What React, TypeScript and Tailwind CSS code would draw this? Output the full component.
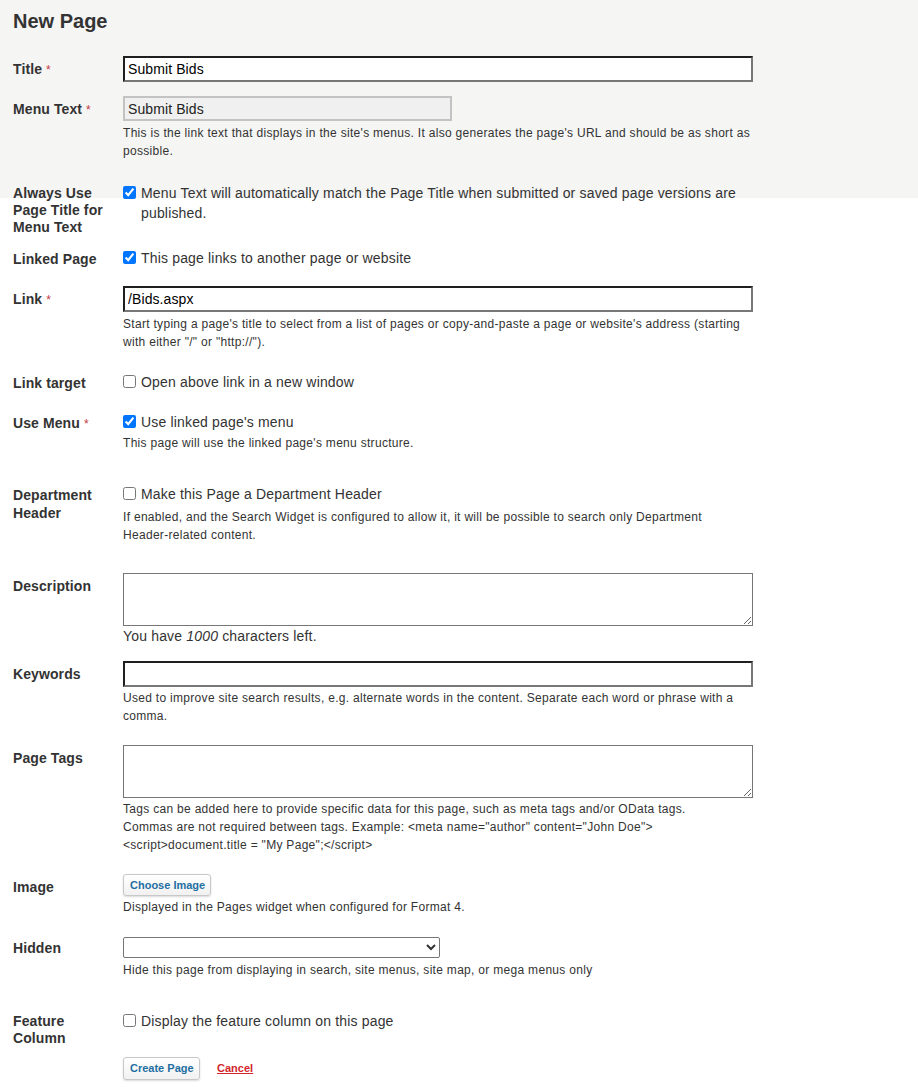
import type { ReactNode } from 'react';

const font = { fontFamily: '"Liberation Sans", Arial, sans-serif' };

function Req() {
  return <span className="ml-[4px] text-[12px] font-normal leading-none text-[#c8383c]">*</span>;
}

function Row({ label, labelClass = 'leading-[26px]', className = '', children }: {
  label: ReactNode; labelClass?: string; className?: string; children: ReactNode;
}) {
  return (
    <div className={`flex items-start ${className}`}>
      <div className={`w-[100px] mr-[10px] shrink-0 text-[14px] font-bold tracking-[0.1px] text-[#333] ${labelClass}`}>{label}</div>
      <div className="w-[630px]">{children}</div>
    </div>
  );
}

function Help({ children, className = 'mt-[3px]' }: { children: ReactNode; className?: string }) {
  return <p className={`text-[12px] leading-[18px] tracking-[0.3px] text-[#333] ${className}`}>{children}</p>;
}

function Check({ checked, children }: { checked?: boolean; children: ReactNode }) {
  return (
    <label className="flex items-start text-[14px] leading-[20px] tracking-[0.17px] text-[#333]">
      <input type="checkbox" defaultChecked={checked} className="mt-[3px] mr-[5px] h-[13px] w-[13px] shrink-0 accent-[#0075ff]" />
      <span>{children}</span>
    </label>
  );
}

const inset = 'block w-full h-[26px] border-2 border-t-[#1f1f1f] border-l-[#1f1f1f] border-r-[#777] border-b-[#777] bg-white px-[3px] text-[14px] tracking-[0.1px] text-black outline-none';
const btn = 'block whitespace-nowrap rounded-[3px] border border-[#c8c8c8] bg-gradient-to-b from-white to-[#f1f1f1] px-[6px] text-[11px] font-bold text-[#1f6fa3] shadow-[0_1px_2px_rgba(0,0,0,0.15)]';

export default function App() {
  return (
    <div
      style={font}
      className="min-h-[1092px] bg-white bg-[linear-gradient(#f5f5f4,#f5f5f4)] bg-no-repeat bg-[length:100%_198px] pl-[13px] text-[#333]"
    >
      <h1 className="pt-[9px] text-[20px] font-bold leading-[24px] text-[#333]">New Page</h1>

      <Row label={<>Title<Req /></>} className="mt-[23px]">
        <input className={inset} defaultValue="Submit Bids" />
      </Row>

      <Row label={<>Menu Text<Req /></>} className="mt-[14px]">
        <input
          disabled
          className="block h-[25px] w-[329px] border-2 border-[#c3c3c3] bg-[#f0f0f0] px-[3px] text-[14px] tracking-[0.1px] text-[#222]"
          defaultValue="Submit Bids"
        />
        <Help>This is the link text that displays in the site's menus. It also generates the page's URL and should be as short as possible.</Help>
      </Row>

      <Row label="Always Use Page Title for Menu Text" labelClass="leading-[17px] pt-[2px]" className="mt-[23px]">
        <Check checked>Menu Text will automatically match the Page Title when submitted or saved page versions are published.</Check>
      </Row>

      <Row label="Linked Page" labelClass="leading-[20px] pt-[1px]" className="mt-[12px]">
        <Check checked>This page links to another page or website</Check>
      </Row>

      <Row label={<>Link<Req /></>} className="mt-[17px]">
        <input className={inset} defaultValue="/Bids.aspx" />
        <Help>Start typing a page's title to select from a list of pages or copy-and-paste a page or website's address (starting with either "/" or "http://").</Help>
      </Row>

      <Row label="Link target" labelClass="leading-[20px] pt-[1px]" className="mt-[21px]">
        <Check>Open above link in a new window</Check>
      </Row>

      <Row label={<>Use Menu<Req /></>} labelClass="leading-[20px] pt-[1px]" className="mt-[19px]">
        <Check checked>Use linked page's menu</Check>
        <Help className="mt-[2px]">This page will use the linked page's menu structure.</Help>
      </Row>

      <Row label="Department Header" labelClass="leading-[18px] pt-[2px]" className="mt-[32px]">
        <Check>Make this Page a Department Header</Check>
        <Help className="mt-[4px]">
          If enabled, and the Search Widget is configured to allow it, it will be possible to search only Department{' '}
          <span className="whitespace-nowrap">Header-related</span> content.
        </Help>
      </Row>

      <Row label="Description" className="mt-[29px]">
        <textarea className="block h-[53px] w-full border border-[#767676] bg-white" />
        <p className="mt-[1px] text-[14px] leading-[18px] tracking-[0.17px] text-[#333]">You have <em>1000</em> characters left.</p>
      </Row>

      <Row label="Keywords" className="mt-[16px]">
        <input className={inset} />
        <Help className="mt-[2px]">Used to improve site search results, e.g. alternate words in the content. Separate each word or phrase with a comma.</Help>
      </Row>

      <Row label="Page Tags" className="mt-[20px]">
        <textarea className="block h-[53px] w-full border border-[#767676] bg-white" />
        <Help className="mt-[2px]">
          Tags can be added here to provide specific data for this page, such as meta tags and/or OData tags.<br />
          Commas are not required between tags. Example: &lt;meta name="author" content="John Doe"&gt;<br />
          &lt;script&gt;document.title = "My Page";&lt;/script&gt;
        </Help>
      </Row>

      <Row label="Image" labelClass="leading-[22px] pt-[2px]" className="mt-[20px]">
        <button className={`${btn} h-[22px] w-[88px]`}>Choose Image</button>
        <Help className="mt-[2px]">Displayed in the Pages widget when configured for Format 4.</Help>
      </Row>

      <Row label="Hidden" labelClass="leading-[22px]" className="mt-[21px]">
        <select className="block h-[21px] w-[317px] rounded-[2px] border border-[#767676] bg-white text-[13px]">
          <option></option>
          <option>Yes</option>
          <option>No</option>
        </select>
        <Help className="mt-[3px]">Hide this page from displaying in search, site menus, site map, or mega menus only</Help>
      </Row>

      <Row label="Feature Column" labelClass="leading-[17px] pt-[2px]" className="mt-[32px]">
        <Check>Display the feature column on this page</Check>
      </Row>

      <div className="mt-[10px] flex items-center pl-[110px]">
        <button className={`${btn} h-[23px] w-[77px]`}>Create Page</button>
        <a href="#" className="ml-[17px] text-[11px] font-bold text-[#d2262c] underline">Cancel</a>
      </div>
    </div>
  );
}
